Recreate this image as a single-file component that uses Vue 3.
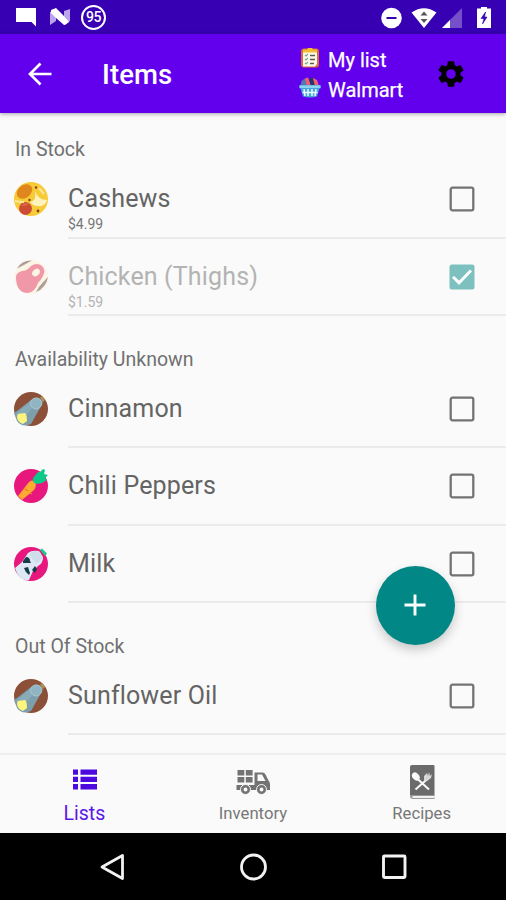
<script setup>
import { ref } from 'vue'

const sections = ref([
  {
    title: 'In Stock',
    items: [
      { name: 'Cashews', price: '$4.99', icon: 'nuts', checked: false },
      { name: 'Chicken (Thighs)', price: '$1.59', icon: 'meat', checked: true },
    ],
  },
  {
    title: 'Availability Unknown',
    items: [
      { name: 'Cinnamon', price: '', icon: 'jar', checked: false },
      { name: 'Chili Peppers', price: '', icon: 'carrot', checked: false },
      { name: 'Milk', price: '', icon: 'milk', checked: false },
    ],
  },
  {
    title: 'Out Of Stock',
    items: [{ name: 'Sunflower Oil', price: '', icon: 'jar', checked: false }],
  },
])
</script>

<template>
  <div class="screen">
    <header class="status">
      <div class="status-left">
        <svg width="20" height="20" viewBox="0 0 20 20"><path fill="#fff" d="M0 1h20v18.500L15.500 15H0z" /></svg>
        <svg class="n-icon" width="20" height="18" viewBox="0 0 20 18">
          <path fill="#b9a3ea" d="M0 4l6-3v12l-6 4zM14 3l6-2v12l-6 4z" />
          <path fill="#fff" d="M1 2L6 0l7 7 6 7-4 3h-1L6 10 1 5z" />
        </svg>
        <span class="percent">95</span>
      </div>
      <div class="status-right">
        <svg width="22" height="22" viewBox="0 0 22 22"><circle cx="11.500" cy="11" r="10.300" fill="#fff" /><path d="M6.500 11h10" stroke="#3700b3" stroke-width="2" /></svg>
        <svg class="wifi" width="26" height="20" viewBox="0 0 26 20">
          <path d="M.5 4.500Q13-4 25.500 4.500L13 20z" fill="#fff" />
          <path d="M9.500 7.500L13 3.500l3.500 4zM9.500 11h7L13 15z" fill="#555" />
        </svg>
        <svg class="signal" width="20" height="20" viewBox="0 0 20 20"><path d="M20 0v20H0z" fill="#7650c9" /><path d="M8 12v8H0z" fill="#fff" /></svg>
        <svg class="battery" width="14" height="21" viewBox="0 0 14 21"><path d="M4 0h6v1.500h4V21H0V1.500h4z" fill="#fff" /><path d="M8.500 5L4 11.500h3L5.500 17l4.500-7H7.500z" fill="#3700b3" stroke="#3700b3" stroke-width=".6" /></svg>
      </div>
    </header>

    <div class="appbar">
      <svg class="back" width="24" height="24" viewBox="0 0 24 24"><path d="M23.500 12H2.500M12.500 1.500L2 12l10.500 10.500" fill="none" stroke="#fff" stroke-width="2.700" /></svg>
      <h1>Items</h1>
      <div class="context">
        <div class="context-row">
          <svg width="22" height="22" viewBox="0 0 22 22">
            <rect x="2" y="1.500" width="18" height="19" rx="3" fill="#d96a40" />
            <path d="M4 3.500h14V17l-2 2.500H4z" fill="#fffbe8" />
            <path d="M4 2.500h4l1-1.500h4l1 1.500h4v3H4z" fill="#f4bd35" />
            <path d="M11 8.500H16M11 12.500H16M11 16.500H15" stroke="#5d5652" stroke-width="1.500" />
            <path d="M6 8l1 1 2-2M6 12l1 1 2-2M6 16l1 1 2-2" fill="none" stroke="#6fae92" stroke-width="1.200" />
          </svg>
          <span>My list</span>
        </div>
        <div class="context-row">
          <svg width="22" height="22" viewBox="0 0 22 22">
            <path d="M2.500 4l4-3 2 8H1.500z" fill="#5577b4" />
            <path d="M6 1.500l3-1 3 8H8zM14 1l4 2 2 6h-5z" fill="#f0616a" />
            <path d="M10 1.500l3.500-1L16 9h-4z" fill="#26366b" />
            <path d="M.5 8h21v3.500h-1L18 19.500q-7 2-14 0L1.500 11.500h-1z" fill="#46a5d8" />
            <path d="M5 12l1 7M9 12v7M13 12v7M17 12l-1 7M3.500 15.500h15" stroke="#e9fbff" stroke-width="1.500" />
            <path d="M.5 8.500h21V11H.5z" fill="#8fd4ee" />
          </svg>
          <span>Walmart</span>
        </div>
      </div>
      <svg class="gear" width="32" height="32" viewBox="0 0 24 24">
        <path d="M19.140 12.940c.04-.3.060-.61.060-.94 0-.32-.02-.64-.07-.94l2.030-1.580c.18-.14.23-.41.120-.61l-1.920-3.320c-.12-.22-.37-.29-.59-.22l-2.390.96c-.5-.38-1.030-.7-1.620-.94l-.36-2.540c-.04-.24-.24-.41-.48-.41h-3.840c-.24 0-.43.17-.47.41l-.36 2.540c-.59.24-1.130.57-1.620.94l-2.390-.96c-.22-.08-.47 0-.59.22L2.740 8.870c-.12.21-.08.47.120.61l2.030 1.580c-.05.3-.09.63-.09.94s.02.64.070.94l-2.030 1.580c-.18.14-.23.41-.12.61l1.920 3.320c.12.22.37.29.59.22l2.390-.96c.5.38 1.030.7 1.620.94l.36 2.540c.05.24.24.41.48.41h3.840c.24 0 .44-.17.470-.41l.36-2.540c.59-.24 1.130-.56 1.620-.94l2.390.96c.22.08.47 0 .59-.22l1.920-3.320c.12-.22.070-.47-.12-.61zM12 15.600A3.600 3.600 0 1 1 12 8.400a3.600 3.600 0 0 1 0 7.200z" />
      </svg>
    </div>

    <main class="list">
      <section v-for="s in sections" :key="s.title">
        <h2>{{ s.title }}</h2>
        <div v-for="item in s.items" :key="item.name" class="row" :class="{ done: item.checked }">
          <svg class="avatar" width="34" height="34" viewBox="0 0 34 34">
            <g v-if="item.icon === 'nuts'">
              <circle cx="17" cy="17" r="17" fill="#f7cb38" />
              <ellipse cx="10.500" cy="9.500" rx="8.500" ry="6.300" transform="rotate(-38 10.500 9.500)" fill="#df861c" />
              <path d="M5 13Q13 11 15 4" fill="none" stroke="#e08a1f" stroke-width="1.300" />
              <path d="M21 9q3 9 12 9-2 7-9 6-5 0-8-4 7-1 5-11z" fill="#fff2bd" />
              <circle cx="11.500" cy="26.500" r="6.500" fill="#cc4d33" />
              <path d="M7 24q4-5 8-2l-4 2z" fill="#d9694a" />
              <path d="M1 19q5 1 9 1M25 6l5 6" stroke="#ffe896" stroke-width="2" />
              <g fill="#81401b"><circle cx="22" cy="5.500" r="1.200" /><circle cx="15.500" cy="18" r="1.200" /><circle cx="24" cy="29" r="1.400" /></g>
            </g>
            <g v-else-if="item.icon === 'meat'">
              <circle cx="17" cy="17" r="17" fill="#fff0d2" />
              <path d="M3 8.500Q8 0 18 .5L8 6zM22 32q10-4 12-15-5 5-9 10z" fill="#674539" />
              <path d="M2 19Q1 13 8 11q5 0 9-5 6-4 11 0 4 4 1 10-2 4-5 7-3 9-10 10Q3 33 2 19z" fill="#e83758" />
              <ellipse cx="22" cy="12.500" rx="4.300" ry="3.300" transform="rotate(-45 22 12.500)" fill="#fff2cf" />
            </g>
            <g v-else-if="item.icon === 'jar'">
              <circle cx="17" cy="17" r="17" fill="#8b5037" />
              <path d="M3 19L17 8q7-5 11 0 2 4-2 8L17 32Q8 36 3 29L0 21z" fill="#7d9fac" />
              <path d="M2 22L17 9l4 4L8 28z" fill="#88adb9" />
              <circle cx="22" cy="11.500" r="5.500" fill="#91b4c2" stroke="#a8c5cf" />
              <path d="M26 5.500l2.500-1.500L31 8l-2 2z" fill="#b19152" />
              <path d="M4 22l7-1q2 2 2 8l-4 3q-6-2-6-8z" fill="#fff57d" />
            </g>
            <g v-else-if="item.icon === 'carrot'">
              <circle cx="17" cy="17" r="17" fill="#e8177d" />
              <path d="M4 27L15 13q3-3 6 0 2 4-1 8L8 31z" fill="#ffa832" />
              <path d="M11 20l3 2M16 24l2 1" stroke="#e68522" stroke-width="1.300" />
              <path d="M19 9l5-6h2l3-3 2 1-1 4 4 1-3 3 2 2-5 3-5 1q-5-1-4-6z" fill="#0bc987" />
            </g>
            <g v-else>
              <circle cx="17" cy="17" r="17" fill="#e8177d" />
              <path d="M1 21l7-6 6-9q5-4 12-1l3 6q0 5-5 8l-5 5-4 9Q5 35 1 21z" fill="#dce8f3" />
              <path d="M15 8q4-5 10-4l4 6q-2 4-7 6z" fill="#d0ddea" />
              <path d="M9 14l3-4q4 0 4 4l1 2H9zM10 21l4-1 2 6-1 2q-4-3-5-7zM18 23l3-4 2 3-2 4z" fill="#153d49" />
              <path d="M26 3l2-1.500 5 5L31 9z" fill="#16cc86" />
            </g>
          </svg>
          <div class="body">
            <div class="texts">
              <div class="name">{{ item.name }}</div>
              <div v-if="item.price" class="price">{{ item.price }}</div>
            </div>
            <svg class="check" width="26" height="26" viewBox="0 0 26 26">
              <template v-if="item.checked">
                <rect x=".5" y=".5" width="25" height="25" rx="2.500" fill="#018786" />
                <path d="M4 12.800l6 6L22 6.500" fill="none" stroke="#fff" stroke-width="3" />
              </template>
              <rect v-else x="1.700" y="1.700" width="22.600" height="22.600" rx="1.800" fill="none" stroke="#737373" stroke-width="2.300" />
            </svg>
          </div>
        </div>
      </section>
    </main>

    <button class="fab" aria-label="Add item">
      <svg width="22" height="22" viewBox="0 0 22 22"><path d="M11 .5v21M.5 11h21" stroke="#fff" stroke-width="2.900" /></svg>
    </button>

    <nav class="tabs">
      <div class="tab active">
        <svg width="34" height="36" viewBox="0 0 34 36"><path fill="#4d08df" d="M6 5.500h5v5.300H6zM13.500 5.500h16.500v5.300H13.500zM6 12.800h5v5.300H6zM13.500 12.800h16.500v5.300H13.500zM6 20.100h5v5.300H6zM13.500 20.100h16.500v5.300H13.500z" /></svg>
        <span>Lists</span>
      </div>
      <div class="tab">
        <svg width="34" height="36" viewBox="0 0 34 36">
          <path fill="#737373" d="M1.500 6h6.800v5.500H1.500zM9.800 6h6.800v5.500H9.800zM1.500 13h6.800v5.500H1.500zM9.800 13h6.800v5.500H9.800z" />
          <path fill="#737373" fill-rule="evenodd" d="M18.500 8.500h8q2 0 3 2l3 6q1.500 1 1.500 4V26H.5v-5h18zM21.500 10.500v6.500h8l-3.500-6.500z" />
          <g fill="#737373" stroke="#fafafa" stroke-width="1"><circle cx="9.500" cy="25.500" r="5" /><circle cx="25.500" cy="25.500" r="5" /></g>
          <g fill="#fafafa"><circle cx="9.500" cy="25.500" r="1.900" /><circle cx="25.500" cy="25.500" r="1.900" /></g>
        </svg>
        <span>Inventory</span>
      </div>
      <div class="tab">
        <svg width="34" height="36" viewBox="0 0 34 36">
          <path d="M7 1h21.500q1 0 1 1v29.500H5V3q0-2 2-2z" fill="#6b6b6b" />
          <path d="M5 31h24.500v4H8q-3 0-3-3z" fill="#9a9a9a" />
          <path d="M7.500 32h22v2h-22z" fill="#f1f1f1" />
          <path d="M11.500 14L24 25.500M23.500 14L10.500 25.500" stroke="#fafafa" stroke-width="2" />
          <ellipse cx="10.800" cy="12.500" rx="3.200" ry="4.500" transform="rotate(-42 10.800 12.500)" fill="#fafafa" />
          <path d="M19 16l0-4 3-3 1 3 1-4 1 4 2-2-1 4-4 3z" fill="#d8d8d8" />
        </svg>
        <span>Recipes</span>
      </div>
    </nav>

    <footer class="sysnav">
      <svg width="28" height="28" viewBox="0 0 28 28"><path d="M24.500 2.500v23L4 14z" fill="none" stroke="#f2f2f2" stroke-width="2.800" stroke-linejoin="round" /></svg>
      <svg width="28" height="28" viewBox="0 0 28 28"><circle cx="14.500" cy="14" r="12" fill="none" stroke="#f2f2f2" stroke-width="2.800" /></svg>
      <svg width="28" height="28" viewBox="0 0 28 28"><rect x="3.500" y="3" width="21.500" height="21.500" rx="1" fill="none" stroke="#f2f2f2" stroke-width="2.900" /></svg>
    </footer>
  </div>
</template>

<style>
body { margin: 0; background: #fafafa; }
</style>

<style scoped>
* { box-sizing: border-box; }
svg { display: block; flex: none; }
.screen { position: relative; display: flex; flex-direction: column; width: 506px; height: 900px; overflow: hidden; background: #fafafa; font-family: Roboto, "Liberation Sans", sans-serif; }
.status { flex: none; display: flex; justify-content: space-between; height: 34px; padding: 0 15px 0 16px; background: #3700b3; }
.status-left, .status-right { display: flex; align-items: center; }
.status-right { padding-top: 1px; }
.n-icon { margin-left: 14px; }
.percent { display: grid; place-items: center; width: 25px; height: 25px; margin-left: 11px; border: 2px solid #fff; border-radius: 50%; color: #fff; font-size: 14px; font-weight: 500; letter-spacing: -.4px; }
.wifi { margin-left: 9px; }
.signal { margin-left: 5px; }
.battery { margin-left: 15px; }
.appbar { position: relative; z-index: 1; flex: none; display: flex; align-items: center; height: 79px; padding-left: 28px; background: #6200ee; color: #fff; box-shadow: 0 1px 4px rgba(0, 0, 0, .35); }
h1 { width: 197px; margin: 2px 0 0 50px; font-size: 27.500px; font-weight: 500; line-height: 32px; letter-spacing: .1px; }
.context { display: grid; gap: 1px; width: 135px; margin-left: 1px; padding-top: 2px; font-size: 20px; line-height: 28px; }
.context-row { display: flex; align-items: center; gap: 7px; height: 29px; margin-left: -1px; }
.context-row svg { margin-top: -3px; }
.context-row span { -webkit-text-stroke: .25px #fff; white-space: nowrap; }
.list { flex: 1; min-height: 0; overflow: hidden; }
h2 { display: flex; align-items: flex-end; height: 54.500px; margin: 0; padding: 0 15px; color: #707070; font-size: 19.500px; font-weight: 400; line-height: 22px; }
section:first-child h2 { height: 48px; }
.row { display: flex; height: 77.500px; padding-left: 14px; }
.avatar { margin: 21px 20px 0 0; }
.body { flex: 1; display: flex; justify-content: space-between; padding-right: 31px; border-bottom: 2px solid #ebebeb; }
.name { margin-top: 22px; color: #646464; font-size: 25px; line-height: 32px; letter-spacing: .15px; }
.price { color: #777; font-size: 14px; line-height: 18px; }
.check { margin-top: 25px; }
.done .avatar, .done .check { opacity: .5; }
.done .name, .done .price { color: #b3b3b3; }
.fab { position: absolute; z-index: 2; left: 376px; top: 565.500px; display: grid; place-items: center; width: 79px; height: 79px; padding: 0 1px 0 0; border: 0; border-radius: 50%; background: #018786; box-shadow: 0 5px 11px rgba(0, 0, 0, .2); }
.tabs { flex: none; display: grid; grid-template-columns: repeat(3, 1fr); height: 80px; border-top: 2px solid #eee; background: #fafafa; }
.tab { display: flex; flex-direction: column; align-items: center; padding-top: 9px; color: #777; font-size: 16.700px; line-height: 22px; }
.tab span { padding-top: 3px; }
.active { color: #5c16e8; font-size: 19.500px; }
.sysnav { flex: none; display: flex; justify-content: center; align-items: center; gap: 113px; height: 67px; background: #000; }
</style>
